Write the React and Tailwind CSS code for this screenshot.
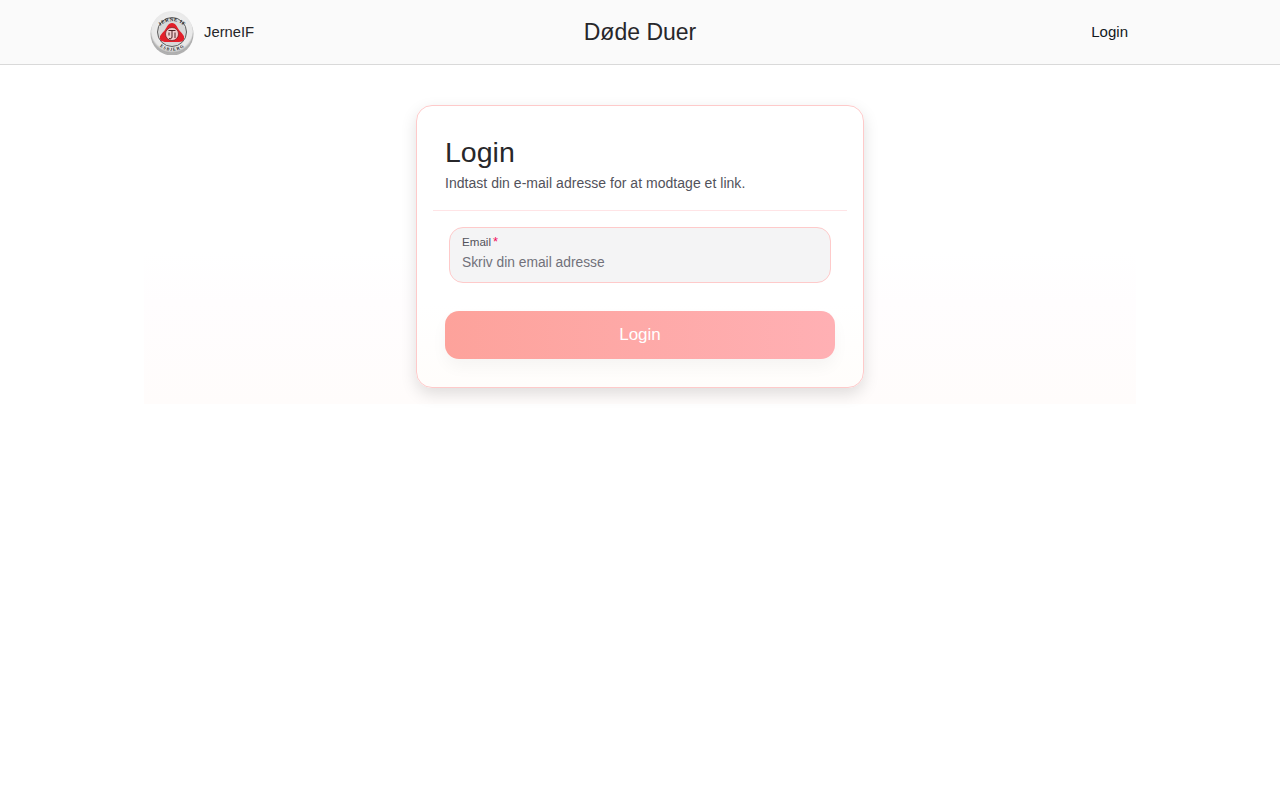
function Logo() {
  return (
    <svg width="44" height="46" viewBox="0 0 44 46" className="shrink-0">
      <defs>
        <radialGradient id="rim" cx="50%" cy="45%" r="55%">
          <stop offset="0%" stopColor="#f7f7f7" />
          <stop offset="88%" stopColor="#e8e8e8" />
          <stop offset="100%" stopColor="#a8a8a8" />
        </radialGradient>
        <path id="top-arc" d="M5.5 25 A17 17 0 0 1 38.5 25" />
        <path id="bottom-arc" d="M7 29 A16.5 16.5 0 0 0 37 29" />
      </defs>
      <circle cx="22" cy="25" r="21.5" fill="#666666" opacity="0.5" />
      <circle cx="22" cy="23" r="21" fill="url(#rim)" />
      <circle cx="22" cy="23" r="14.5" fill="#d8d8d8" stroke="#5e5e5e" strokeWidth="1" />
      <path d="M22 14 C26 14 27 18 29 21 C31 24 35 26 34 30 C33 33 30 33 27 33 L17 33 C14 33 11 33 10 30 C9 26 13 24 15 21 C17 18 18 14 22 14 Z" fill="#e21f2a" />
      <circle cx="22" cy="25" r="6.5" fill="#f0cfcf" stroke="#6b1a1e" strokeWidth="0.7" />
      <path d="M18.5 21.5h7M22 21.5v6.5c0 1.6-1.6 2.2-3 1.4M25 23.5v5.5M19 23.5v3" fill="none" stroke="#3a1114" strokeWidth="0.9" />
      <text fontSize="5" fontWeight="700" fontFamily="'Liberation Serif', serif" fill="#1f1f1f" letterSpacing="0.5" textAnchor="middle">
        <textPath href="#top-arc" startOffset="50%">JERNE IF</textPath>
      </text>
      <text fontSize="4.5" fontWeight="700" fontFamily="'Liberation Serif', serif" fill="#1f1f1f" letterSpacing="0.3" textAnchor="middle">
        <textPath href="#bottom-arc" startOffset="50%" dominantBaseline="hanging">ESBJERG</textPath>
      </text>
    </svg>
  )
}

function App() {
  return (
    <div className="min-h-screen bg-white text-[#11181c] font-['Liberation_Sans',Arial,sans-serif]">
      <nav className="h-[65px] bg-[#fafafa] border-b border-[#d9d9d9]">
        <div className="max-w-[992px] h-full mx-auto px-[6px] flex items-center justify-between">
          <div className="w-[200px] flex items-center gap-[10px]">
            <Logo />
            <span className="text-[14.8px] text-[#27272a]">JerneIF</span>
          </div>
          <span className="text-[23px] leading-8 text-[#27272a]">Døde Duer</span>
          <div className="w-[200px] pr-[2px] text-right text-[15px] text-[#11181c]">Login</div>
        </div>
      </nav>
      <main className="max-w-[992px] h-[339px] mx-auto pt-10 bg-gradient-to-b from-white from-55% via-[#fffdfe] via-70% to-[#fffcfb]">
        <div className="w-[448px] h-[283px] mx-auto p-4 border border-[#fecaca] rounded-2xl bg-gradient-to-b from-white from-70% to-[#fffdfb] shadow-[0_6px_16px_rgba(0,0,0,0.13)]">
          <div className="px-3 pt-3 h-[89px] border-b border-[#ffe4e6]">
            <h1 className="text-[28.5px] leading-9 text-[#27272a]">Login</h1>
            <p className="mt-[3px] text-sm leading-5 tracking-[0.03px] text-[#52525b]">Indtast din e-mail adresse for at modtage et link.</p>
          </div>
          <div className="px-3 pt-4">
            <div className="mx-1 h-14 px-3 pt-[6px] bg-[#f4f4f5] border border-[#fecaca] rounded-[14px]">
              <div className="text-[11.6px] leading-4 text-[#52525b]">
                Email<span className="ml-[2px] text-[13px] leading-none text-[#f31260]">*</span>
              </div>
              <div className="mt-[3px] text-[13.8px] leading-5 text-[#71717a]">Skriv din email adresse</div>
            </div>
            <button className="mt-7 w-full h-12 rounded-[14px] text-[17px] text-white bg-gradient-to-r from-[#fda29b] to-[#ffb0b4] shadow-[0_8px_16px_rgba(0,0,0,0.04)]">
              Login
            </button>
          </div>
        </div>
      </main>
    </div>
  )
}

export default App
